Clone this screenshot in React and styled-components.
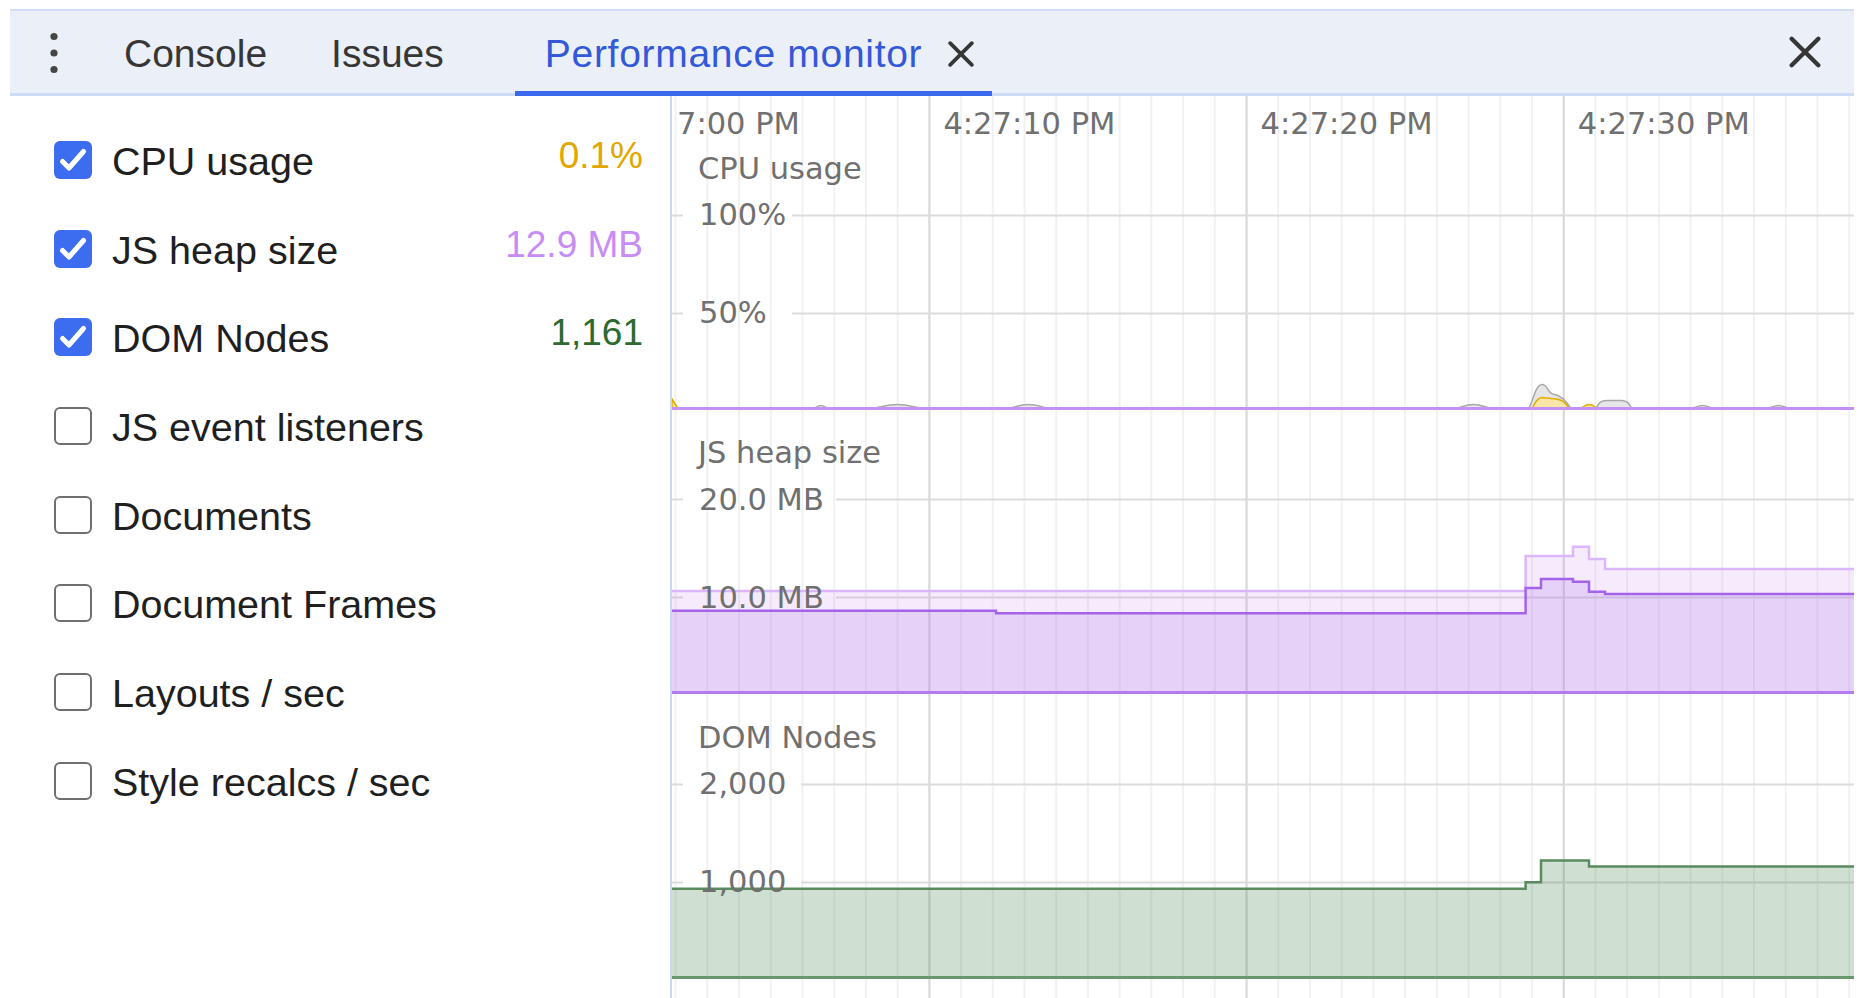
import React from 'react'
import styled, { createGlobalStyle } from 'styled-components'

const GlobalStyle = createGlobalStyle`
  html, body {
    margin: 0;
    padding: 0;
    background: #fff;
  }
  body {
    font-family: "Liberation Sans", Arial, sans-serif;
  }
`;

const CHART_W = 1182;
const PANE_H = 284.5;
const MAJOR = 317.2;
const FIRST_MAJOR = 257.4;

const Page = styled.div`
  width: 1866px;
  height: 998px;
  box-sizing: border-box;
  padding: 9px 12px 0 10px;
  display: flex;
  flex-direction: column;
  overflow: hidden;
`;

const Toolbar = styled.div`
  height: 87px;
  box-sizing: border-box;
  flex: none;
  display: flex;
  align-items: stretch;
  background: #ebeff8;
  border-top: 2px solid #d3dff8;
  border-bottom: 3px solid #cddaf6;
`;

const MenuButton = styled.div`
  width: 64px;
  margin-left: 12px;
  margin-right: 6px;
  padding-top: 2px;
  display: flex;
  align-items: center;
  justify-content: center;
`;

const Tab = styled.div`
  position: relative;
  display: flex;
  align-items: center;
  gap: 24px;
  padding: ${p => (p.$active ? '4px 16px 0 30px' : '4px 32px 0')};
  margin-left: ${p => (p.$active ? '39px' : '0')};
  font-size: 39px;
  letter-spacing: ${p => (p.$active ? '0.7px' : '0')};
  color: ${p => (p.$active ? '#3358d8' : '#363636')};
  white-space: nowrap;

  &::after {
    content: '';
    display: ${p => (p.$active ? 'block' : 'none')};
    position: absolute;
    left: 0;
    right: 0;
    bottom: -3px;
    height: 5px;
    background: #3a69ee;
  }
`;

const TabClose = styled.span`
  width: 30px;
  height: 30px;
  display: flex;
  align-items: center;
  justify-content: center;
`;

const Spacer = styled.div`
  flex: 1;
`;

const CloseButton = styled.div`
  width: 32px;
  margin-right: 33px;
  display: flex;
  align-items: center;
  justify-content: center;
`;

const Main = styled.div`
  flex: 1;
  display: flex;
  min-height: 0;
`;

const Sidebar = styled.div`
  width: 660px;
  flex: none;
  box-sizing: border-box;
  padding: 19.5px 27px 0 44px;
  display: flex;
  flex-direction: column;
`;

const MetricRow = styled.div`
  height: 88.7px;
  display: flex;
  align-items: center;
`;

const Box = styled.span`
  width: 38px;
  height: 38px;
  box-sizing: border-box;
  flex: none;
  border-radius: 6px;
  margin-right: 20px;
  display: flex;
  align-items: center;
  justify-content: center;
  background: ${p => (p.$checked ? '#3c6cf0' : '#fff')};
  border: ${p => (p.$checked ? 'none' : '2.5px solid #6f6f6f')};
`;

const Label = styled.span`
  flex: 1;
  font-size: 39.5px;
  padding-top: 3px;
  color: #1f1f1f;
  white-space: nowrap;
`;

const Value = styled.span`
  font-size: 37px;
  color: ${p => p.$color};
  margin-bottom: 8px;
  white-space: nowrap;
`;

const ChartColumn = styled.div`
  flex: 1;
  position: relative;
  overflow: hidden;
  border-left: 2px solid #c9d7f7;
  display: flex;
  flex-direction: column;
  background:
    linear-gradient(90deg, #d8d8d8 0, #d8d8d8 2px, transparent 2px) ${FIRST_MAJOR - 1}px 0 / ${MAJOR}px 100% repeat-x,
    linear-gradient(90deg, #f1f1f1 0, #f1f1f1 2px, transparent 2px) 2.6px 0 / ${MAJOR / 10}px 100% repeat-x,
    #fff;
`;

const chartFont = `
  font-family: "DejaVu Sans", Verdana, sans-serif;
  font-size: 30.5px;
  line-height: 1;
  color: #707070;
  white-space: nowrap;
`;

const TimeAxis = styled.div`
  height: 30.5px;
  flex: none;
  position: relative;
`;

const TimeLabel = styled.span`
  ${chartFont}
  position: absolute;
  top: 12.6px;
  z-index: 1;
`;

const Pane = styled.div`
  height: ${PANE_H}px;
  flex: none;
  position: relative;
`;

const Plot = styled.svg`
  display: block;
  width: ${CHART_W}px;
  height: ${PANE_H}px;
`;

const PaneTitle = styled.span`
  ${chartFont}
  position: absolute;
  left: 26px;
  top: 27px;
`;

const AxisLabel = styled.span`
  ${chartFont}
  position: absolute;
  left: 27px;
`;

const metrics = [
  { name: 'CPU usage', checked: true, value: '0.1%', color: '#e2a600' },
  { name: 'JS heap size', checked: true, value: '12.9 MB', color: '#c78cf6' },
  { name: 'DOM Nodes', checked: true, value: '1,161', color: '#2c6a2e' },
  { name: 'JS event listeners' },
  { name: 'Documents' },
  { name: 'Document Frames' },
  { name: 'Layouts / sec' },
  { name: 'Style recalcs / sec' },
];

// first tick's label is cut at the left edge of the chart, only its tail shows
const times = [
  { text: '7:00 PM', left: 5 },
  { text: '4:27:10 PM', left: FIRST_MAJOR + 14 },
  { text: '4:27:20 PM', left: FIRST_MAJOR + MAJOR + 14 },
  { text: '4:27:30 PM', left: FIRST_MAJOR + MAJOR * 2 + 14 },
];

const TOP_Y = 88.5;
const MID_Y = 186.5;
const BASE_Y = 281.5;

const steps = (pts) => {
  let d = `M${pts[0][0]} ${pts[0][1]}`;
  for (let i = 1; i < pts.length; i++) {
    d += ` H${pts[i][0]} V${pts[i][1]}`;
  }
  return d;
};

const GridLines = ({ gapEnd }) => (
  <g stroke="#dcdcdc" strokeWidth="2">
    <line x1="0" y1={TOP_Y} x2="11" y2={TOP_Y} />
    <line x1={gapEnd} y1={TOP_Y} x2={CHART_W} y2={TOP_Y} />
    <line x1="0" y1={MID_Y} x2="11" y2={MID_Y} />
    <line x1={gapEnd} y1={MID_Y} x2={CHART_W} y2={MID_Y} />
  </g>
);

const hump = (x0, x1, h) => {
  const m = (x0 + x1) / 2;
  return `M${x0} ${BASE_Y} C${x0 + (m - x0) * 0.5} ${BASE_Y} ${m - (x1 - x0) * 0.25} ${BASE_Y - h} ${m} ${BASE_Y - h} C${m + (x1 - x0) * 0.25} ${BASE_Y - h} ${x1 - (x1 - m) * 0.5} ${BASE_Y} ${x1} ${BASE_Y} Z`;
};

const CpuPlot = () => (
  <Plot viewBox={`0 0 ${CHART_W} ${PANE_H}`}>
    <GridLines gapEnd={120} />
    <g fill="#e6e6e6" stroke="#a9a9a9" strokeWidth="1.5">
      <path d={hump(140, 158, 3)} />
      <path d={hump(195, 256, 4)} />
      <path d={hump(332, 381, 4)} />
      <path d={hump(780, 823, 4)} />
      <path d={`M857 ${BASE_Y} C862 270 864 258 870 257.5 C875 257 876 266 881 267 C888 268 893 272 899 ${BASE_Y} Z`} />
      <path d={`M924 ${BASE_Y} C928 274 930 273.5 936 273.5 L950 273.5 C955 274 957 276 960 ${BASE_Y} Z`} />
      <path d={hump(1018, 1043, 3)} />
      <path d={hump(1094, 1119, 3)} />
    </g>
    <g fill="#f7e6a6" stroke="#e2ad00" strokeWidth="1.5">
      <path d={`M860 ${BASE_Y} C863 276 865 271 870 270.5 L884 272 C889 273 893 274 897 ${BASE_Y} Z`} />
      <path d={hump(906, 928, 4)} />
      <path d={`M0 272 L6 ${BASE_Y} L0 ${BASE_Y} Z`} />
    </g>
    <line x1="0" y1={BASE_Y} x2={CHART_W} y2={BASE_Y} stroke="#c391f6" strokeWidth="3" />
  </Plot>
);

const heapLight = [
  [0, 180], [853.6, 145], [901, 135.7], [917, 148], [933, 158], [CHART_W, 158],
];
const heapDark = [
  [0, 199.7], [324, 202.3], [853.6, 177], [869, 168], [901, 170.7], [917, 180.7], [933, 183], [CHART_W, 183],
];
const domLine = [
  [0, 192.8], [853.6, 186.2], [869, 164.5], [917, 170.5], [CHART_W, 170.5],
];

const area = (pts) => `${steps(pts)} V${BASE_Y} H0 Z`;

const HeapPlot = () => (
  <Plot viewBox={`0 0 ${CHART_W} ${PANE_H}`}>
    <GridLines gapEnd={164} />
    <path d={area(heapLight)} fill="rgba(190,130,245,0.16)" />
    <path d={area(heapDark)} fill="rgba(170,110,235,0.2)" />
    <path d={steps(heapLight)} fill="none" stroke="#dbb6fb" strokeWidth="2.5" />
    <path d={steps(heapDark)} fill="none" stroke="#a463e8" strokeWidth="2.5" />
    <line x1="0" y1={BASE_Y} x2={CHART_W} y2={BASE_Y} stroke="#b57cef" strokeWidth="3" />
  </Plot>
);

const DomPlot = () => (
  <Plot viewBox={`0 0 ${CHART_W} ${PANE_H}`}>
    <GridLines gapEnd={129} />
    <path d={area(domLine)} fill="rgba(70,135,80,0.26)" />
    <path d={steps(domLine)} fill="none" stroke="#5a8b5e" strokeWidth="2.5" />
    <line x1="0" y1={BASE_Y} x2={CHART_W} y2={BASE_Y} stroke="#6a986e" strokeWidth="3" />
  </Plot>
);

const panes = [
  { title: 'CPU usage', top: '100%', mid: '50%', Plot: CpuPlot },
  { title: 'JS heap size', top: '20.0 MB', mid: '10.0 MB', Plot: HeapPlot },
  { title: 'DOM Nodes', top: '2,000', mid: '1,000', Plot: DomPlot },
];

const Dots = () => (
  <svg width="12" height="42" viewBox="0 0 12 42">
    <g fill="#454545">
      <circle cx="6" cy="4.5" r="3.6" />
      <circle cx="6" cy="21" r="3.6" />
      <circle cx="6" cy="37.5" r="3.6" />
    </g>
  </svg>
);

const Cross = ({ size, weight }) => (
  <svg width={size} height={size} viewBox="0 0 24 24">
    <path d="M2 2 L22 22 M22 2 L2 22" stroke="#363636" strokeWidth={weight} strokeLinecap="round" fill="none" />
  </svg>
);

const Check = () => (
  <svg width="38" height="38" viewBox="0 0 38 38">
    <path d="M8.5 20.5 L15 27 L29.5 10.5" stroke="#fff" strokeWidth="5" strokeLinecap="round" strokeLinejoin="round" fill="none" />
  </svg>
);

const App = () => (
  <Page>
    <GlobalStyle />
    <Toolbar>
      <MenuButton><Dots /></MenuButton>
      <Tab>Console</Tab>
      <Tab>Issues</Tab>
      <Tab $active>
        Performance monitor
        <TabClose><Cross size={26} weight={3.4} /></TabClose>
      </Tab>
      <Spacer />
      <CloseButton><Cross size={32} weight={3.2} /></CloseButton>
    </Toolbar>
    <Main>
      <Sidebar>
        {metrics.map(m => (
          <MetricRow key={m.name}>
            <Box $checked={m.checked}>{m.checked && <Check />}</Box>
            <Label>{m.name}</Label>
            {m.value && <Value $color={m.color}>{m.value}</Value>}
          </MetricRow>
        ))}
      </Sidebar>
      <ChartColumn>
        <TimeAxis>
          {times.map(t => (
            <TimeLabel key={t.text} style={{ left: t.left }}>{t.text}</TimeLabel>
          ))}
        </TimeAxis>
        {panes.map(({ title, top, mid, Plot: P }) => (
          <Pane key={title}>
            <P />
            <PaneTitle>{title}</PaneTitle>
            <AxisLabel style={{ top: TOP_Y - 14.7 }}>{top}</AxisLabel>
            <AxisLabel style={{ top: MID_Y - 14.7 }}>{mid}</AxisLabel>
          </Pane>
        ))}
      </ChartColumn>
    </Main>
  </Page>
);

export default App;
